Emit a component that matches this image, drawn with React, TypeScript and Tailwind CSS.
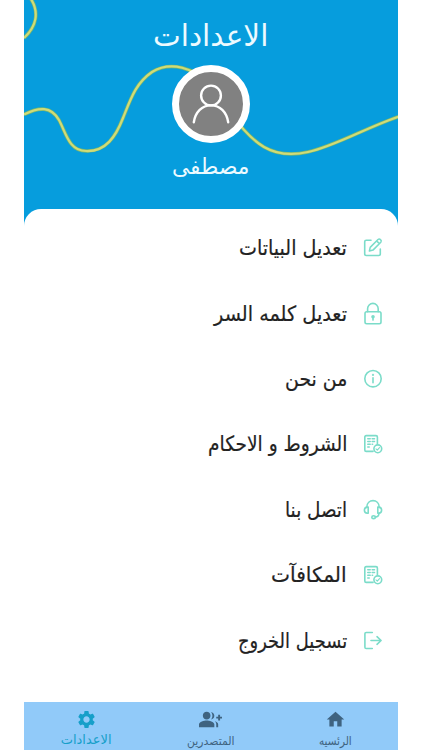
import { useLayoutEffect, useRef, useState, type ReactNode } from "react";
import { MdGroupAdd, MdHome, MdSettings } from "react-icons/md";

/** A single line of Arabic text, condensed or widened to the given width. */
function FitText({ text, width, className = "" }: { text: string; width: number; className?: string }) {
  const ref = useRef<HTMLSpanElement>(null);
  const [scale, setScale] = useState(1);
  useLayoutEffect(() => {
    if (ref.current) setScale(width / ref.current.offsetWidth);
  }, [width, text]);
  return (
    <span dir="rtl" className="flex justify-start" style={{ width }}>
      <span
        ref={ref}
        className={`block shrink-0 origin-right whitespace-nowrap ${className}`}
        style={{ transform: `scaleX(${scale})` }}
      >
        {text}
      </span>
    </span>
  );
}

function Icon({ children }: { children: ReactNode }) {
  return (
    <svg
      viewBox="0 0 20 20"
      className="h-5 w-5 shrink-0 overflow-visible"
      fill="none"
      stroke="#7bdcc9"
      strokeWidth="1.6"
      strokeLinecap="round"
      strokeLinejoin="round"
    >
      {children}
    </svg>
  );
}

const EditIcon = () => (
  <Icon>
    <path d="M8 2.3H3.2Q1.7 2.3 1.7 3.8V16Q1.7 17.5 3.2 17.5H15.8Q17.3 17.5 17.3 16V11" />
    <path d="M6.400 13 7.200 9.400 15 1.500Q16.200 .4 17.500 1.600 18.900 2.900 17.800 4.200L10 12.100ZM13.600 2.900 16.400 5.600" strokeWidth="1.5" />
  </Icon>
);

const LockIcon = () => (
  <Icon>
    <rect x="2" y="7.8" width="16" height="12" rx="1.7" />
    <path d="M4.6 7.8V4.7a5.3 5.3 0 0 1 10.6 0V7.8M10 13.2v2.9" />
    <circle cx="10" cy="12.7" r="1" fill="#7bdcc9" />
  </Icon>
);

const InfoIcon = () => (
  <Icon>
    <circle cx="10" cy="9.700" r="8.2" />
    <path d="M10 8.700v5" />
    <circle cx="10" cy="5.900" r=".35" />
  </Icon>
);

const TermsIcon = () => (
  <Icon>
    <path d="M10 17.4H3.2Q1.8 17.4 1.8 16V3Q1.8 1.6 3.2 1.6H13Q14.4 1.6 14.4 3V10" />
    <path d="M4.8 4.8h2.4M9.2 4.8h2.3M4.8 7.5h2.4M9.2 7.5h2.3M4.8 10.2h2.4M9.2 10.2h.4M4.8 13h1.4" />
    <circle cx="14.8" cy="14.8" r="3.9" />
    <path d="m13 14.9 1.3 1.2 2.2-2.4" strokeWidth="1.1" />
  </Icon>
);

const HeadsetIcon = () => (
  <Icon>
    <path d="M3.8 7.2C3.8-1.6 16.2-1.6 16.2 7.2" />
    <path d="M5.2 7.1v6.2H4.3Q1.4 13 1.4 10.2T4.3 7.1ZM14.8 7.1v6.2h.9Q18.6 13 18.6 10.2T15.7 7.1Z" />
    <path d="M16 13.3Q15.8 17.1 12.2 17.1" />
    <ellipse cx="10.6" cy="17.2" rx="1.8" ry="1.4" />
  </Icon>
);

const LogoutIcon = () => (
  <Icon>
    <path d="M9.3 1.500H3.2Q1.9 1.500 1.9 2.800V16.200Q1.9 17.500 3.2 17.500H9.3M8 9.500H18M14 5.700 18.1 9.500 14 13.300" />
  </Icon>
);

const items = [
  { label: "تعديل البياتات", width: 108, icon: <EditIcon /> },
  { label: "تعديل كلمه السر", width: 133, icon: <LockIcon /> },
  { label: "من نحن", width: 62, icon: <InfoIcon /> },
  { label: "الشروط و الاحكام", width: 139, icon: <TermsIcon /> },
  { label: "اتصل بنا", width: 62, icon: <HeadsetIcon /> },
  { label: "المكافآت", width: 76, icon: <TermsIcon /> },
  { label: "تسجيل الخروج", width: 109, icon: <LogoutIcon /> },
];

const WAVE =
  "M0 114.5C15 107 27 106 35 120C42 133 45 151 62 151C82 152 92 136 99 118C107 98 112 83 128 72C146 61 171 67 186 86C205 108 217 133 240 147C278 169 323 134 375 116.5";
const CURL = "M7-1C15 12 13 26 0 38";

export default function App() {
  return (
    <div className="h-[750px] w-[422px] overflow-hidden bg-white px-6 font-['DejaVu_Sans','Noto_Sans',sans-serif]">
      <main className="flex h-full w-[374px] flex-col bg-[#069ddd]">
        <header className="relative h-[209px] shrink-0">
          <svg viewBox="0 0 374 209" className="absolute inset-0 h-full w-full" fill="none">
            <g stroke="#77b66f" strokeWidth="3.6">
              <path d={CURL} />
              <path d={WAVE} />
            </g>
            <g stroke="#d0db78" strokeWidth="2.2">
              <path d={CURL} />
              <path d={WAVE} />
            </g>
          </svg>
          <div className="relative flex flex-col items-center text-[#edfaff]">
            <h1 className="mt-4 h-[49px]">
              <FitText text="الاعدادات" width={115} className="text-[30px] leading-10" />
            </h1>
            <div className="flex h-[78px] w-[78px] items-center justify-center rounded-full border-[7px] border-white bg-[#818181]">
              <svg viewBox="0 0 64 64" className="h-16 w-16 shrink-0" fill="none" stroke="white" strokeWidth="2.4" strokeLinecap="round">
                <circle cx="32" cy="23.5" r="9.9" />
                <path d="M14.8 50.2C16.5 40 23 33.4 32 33.4S47.5 40 49.2 50.2" />
              </svg>
            </div>
            <div className="mt-2">
              <FitText text="مصطفى" width={77} className="text-[22px] leading-8" />
            </div>
          </div>
        </header>

        <section className="h-[493px] shrink-0 rounded-t-[17px] bg-white pt-[6.5px] pr-[15px]">
          <ul>
            {items.map(({ label, width, icon }) => (
              <li key={label} dir="rtl" className="flex h-[65.4px] items-center gap-4">
                {icon}
                <FitText
                  text={label}
                  width={width}
                  className="text-[21px] leading-8 text-[#222] [-webkit-text-stroke:0.2px_#222]"
                />
              </li>
            ))}
          </ul>
        </section>

        <nav className="flex h-12 shrink-0 bg-[#91caf9] text-[#3f6380]">
          <div className="flex w-[124px] flex-col items-center pt-[7px] text-[#169fc9]">
            <MdSettings size={21} className="shrink-0" />
            <FitText text="الاعدادات" width={51} className="text-[13px] leading-5" />
          </div>
          <div className="flex w-[125px] flex-col items-center pt-[6px]">
            <MdGroupAdd size={23} className="shrink-0" />
            <FitText text="المتصدرين" width={48} className="text-[12px] leading-5" />
          </div>
          <div className="flex w-[125px] flex-col items-center pt-[7px]">
            <MdHome size={21} className="shrink-0" />
            <FitText text="الرئسيه" width={33} className="text-[12px] leading-[22px]" />
          </div>
        </nav>
      </main>
    </div>
  );
}
